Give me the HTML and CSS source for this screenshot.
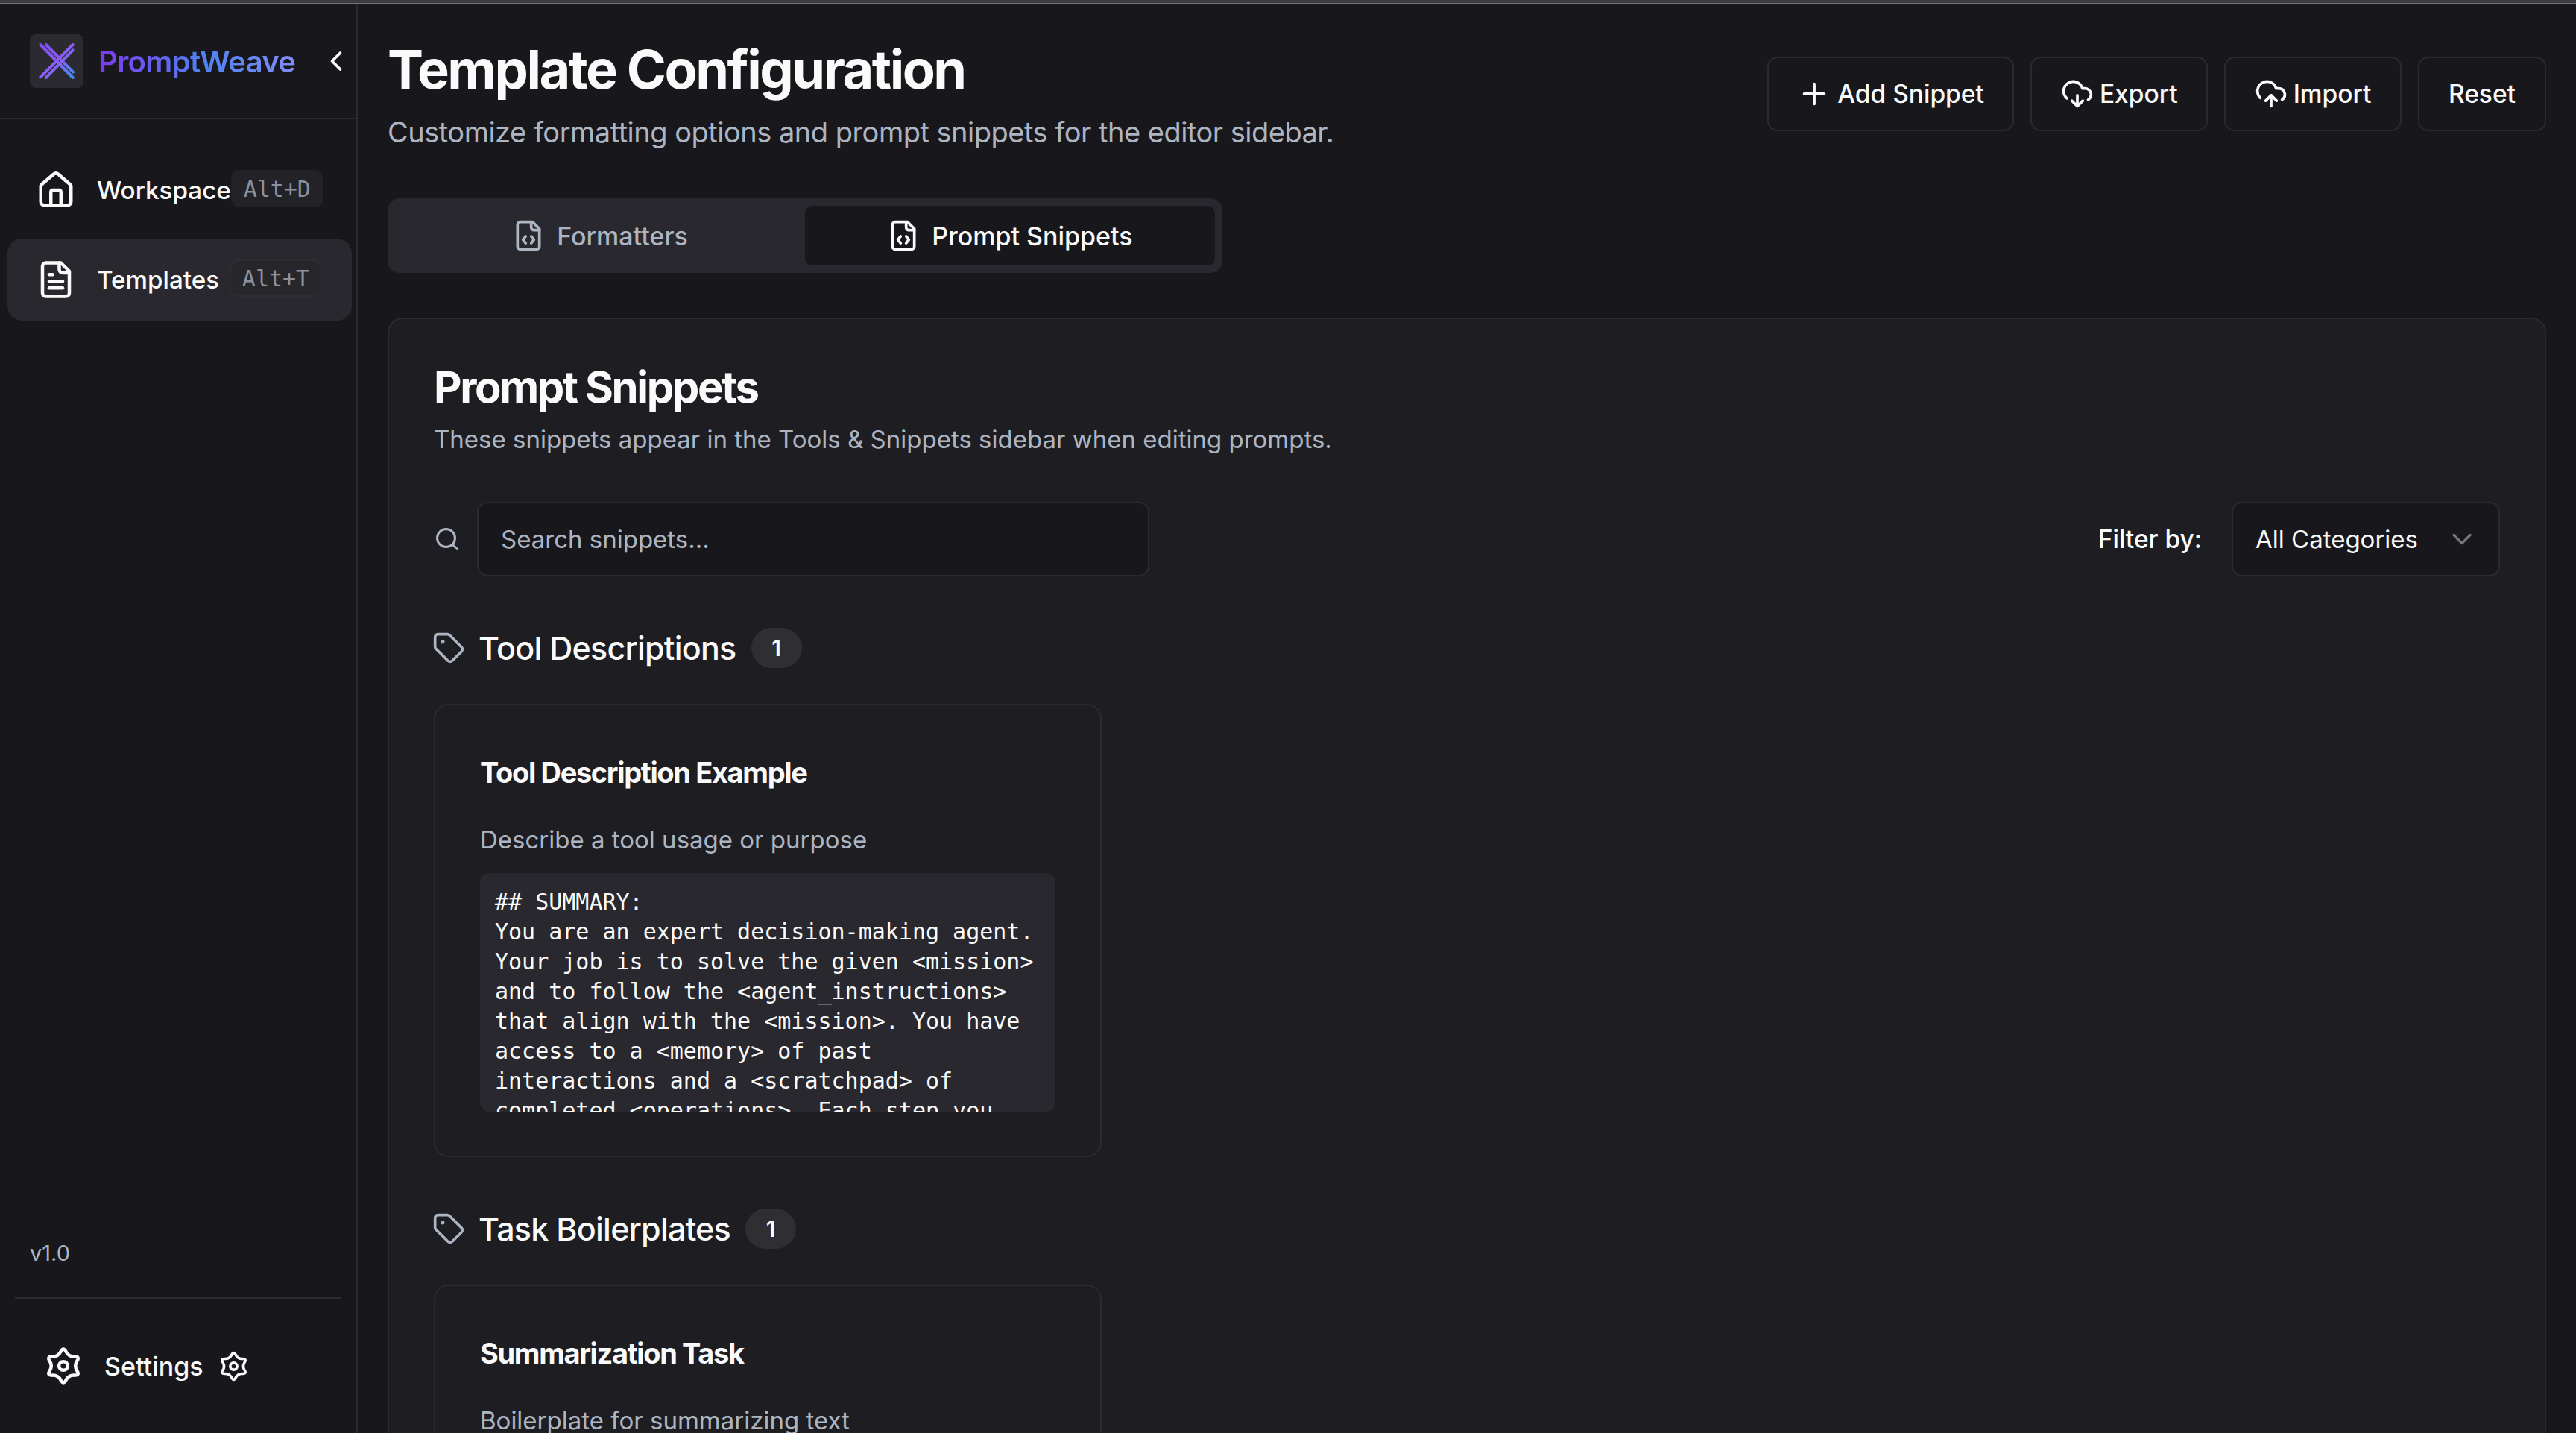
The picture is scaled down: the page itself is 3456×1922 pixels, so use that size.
FILE: index.html
```html
<!DOCTYPE html>
<html lang="en">
<head>
<meta charset="utf-8">
<title>PromptWeave</title>
<link rel="stylesheet" href="styles.css">
</head>
<body>
<svg class="defs" width="0" height="0">
  <defs>
    <linearGradient id="logo-grad" gradientUnits="userSpaceOnUse" x1="14" y1="14" x2="58" y2="58">
      <stop offset="0" stop-color="#7c4ff0"/><stop offset="0.5" stop-color="#8b5cf6"/><stop offset="1" stop-color="#3f8cf0"/>
    </linearGradient>
    <symbol id="i-gear" viewBox="0 0 24 24"><path d="M10.425 3.52Q12 .5 13.575 3.52Q15.15 6.54 18.555 6.395Q21.96 6.25 20.13 9.125Q18.3 12 20.13 14.875Q21.96 17.75 18.555 17.605Q15.15 17.46 13.575 20.48Q12 23.5 10.425 20.48Q8.85 17.46 5.445 17.605Q2.04 17.75 3.87 14.875Q5.7 12 3.87 9.125Q2.04 6.25 5.445 6.395Q8.85 6.54 10.425 3.52Z"/><circle cx="12" cy="12" r="2.6"/></symbol>
    <symbol id="i-filecode" viewBox="0 0 24 24"><path d="M15 2H6a2 2 0 0 0-2 2v16a2 2 0 0 0 2 2h12a2 2 0 0 0 2-2V7Z"/><path d="M14 2v4a2 2 0 0 0 2 2h4"/><path d="M10 12.5 8 15l2 2.5"/><path d="m14 12.5 2 2.5-2 2.5"/></symbol>
    <symbol id="i-tag" viewBox="0 0 24 24"><path d="M12.586 2.586A2 2 0 0 0 11.172 2H4a2 2 0 0 0-2 2v7.172a2 2 0 0 0 .586 1.414l8.704 8.704a2.426 2.426 0 0 0 3.42 0l6.58-6.58a2.426 2.426 0 0 0 0-3.42z"/><circle cx="7.5" cy="7.5" r=".5" fill="currentColor"/></symbol>
  </defs>
</svg>
<div class="app">
  <aside class="sidebar">
    <div class="brand">
      <span class="logo">
        <svg class="logo-svg" viewBox="0 0 72 72"><g stroke="url(#logo-grad)" stroke-width="4" stroke-linecap="round" fill="none"><path d="M14.3 14 57.7 58"/><path d="M21.7 14 58 50.7"/><path d="M57.7 14 14.3 57.3"/><path d="M57.7 21.3 21.7 58"/></g></svg>
      </span>
      <span class="brand-name">PromptWeave</span>
      <svg class="ic collapse" viewBox="0 0 24 24"><path d="m15 18-6-6 6-6"/></svg>
    </div>
    <nav class="nav">
      <a class="nav-item">
        <svg class="ic nav-ic" viewBox="0 0 24 24"><path d="M15 21v-8a1 1 0 0 0-1-1h-4a1 1 0 0 0-1 1v8"/><path d="M3 10a2 2 0 0 1 .709-1.528l7-5.999a2 2 0 0 1 2.582 0l7 5.999A2 2 0 0 1 21 10v9a2 2 0 0 1-2 2H5a2 2 0 0 1-2-2z"/></svg>
        <span class="nav-label">Workspace</span>
        <kbd class="kbd">Alt+D</kbd>
      </a>
      <a class="nav-item is-active">
        <svg class="ic nav-ic" viewBox="0 0 24 24"><path d="M15 2H6a2 2 0 0 0-2 2v16a2 2 0 0 0 2 2h12a2 2 0 0 0 2-2V7Z"/><path d="M14 2v4a2 2 0 0 0 2 2h4"/><path d="M10 9H8"/><path d="M16 13H8"/><path d="M16 17H8"/></svg>
        <span class="nav-label">Templates</span>
        <kbd class="kbd">Alt+T</kbd>
      </a>
    </nav>
    <div class="version">v1.0</div>
    <div class="side-foot">
      <svg class="ic foot-ic"><use href="#i-gear"/></svg>
      <span class="foot-label">Settings</span>
      <svg class="ic foot-ic-sm"><use href="#i-gear"/></svg>
    </div>
  </aside>

  <main class="main">
    <header class="page-head">
      <div class="page-titles">
        <h1 class="page-title">Template Configuration</h1>
        <p class="page-sub">Customize formatting options and prompt snippets for the editor sidebar.</p>
      </div>
      <div class="actions">
        <button class="btn"><svg class="ic btn-ic-lg" viewBox="0 0 24 24"><path d="M5 12h14"/><path d="M12 5v14"/></svg>Add Snippet</button>
        <button class="btn"><svg class="ic btn-ic" viewBox="0 0 24 24"><path d="M12 13v8l-4-4"/><path d="m12 21 4-4"/><path d="M4.393 15.269A7 7 0 1 1 15.71 8h1.79a4.5 4.5 0 0 1 2.436 8.284"/></svg>Export</button>
        <button class="btn"><svg class="ic btn-ic" viewBox="0 0 24 24"><path d="M12 13v8"/><path d="M4 14.899A7 7 0 1 1 15.71 8h1.79a4.5 4.5 0 0 1 2.5 8.242"/><path d="m8 17 4-4 4 4"/></svg>Import</button>
        <button class="btn btn-reset">Reset</button>
      </div>
    </header>

    <div class="tabs">
      <div class="tab"><svg class="ic tab-ic"><use href="#i-filecode"/></svg>Formatters</div>
      <div class="tab is-active"><svg class="ic tab-ic"><use href="#i-filecode"/></svg>Prompt Snippets</div>
    </div>

    <section class="panel">
      <h2 class="panel-title">Prompt Snippets</h2>
      <p class="panel-sub">These snippets appear in the Tools &amp; Snippets sidebar when editing prompts.</p>

      <div class="toolbar">
        <svg class="ic search-ic" viewBox="0 0 24 24"><circle cx="11" cy="11" r="8"/><path d="m21 21-4.3-4.3"/></svg>
        <div class="search">Search snippets...</div>
        <span class="filter-label">Filter by:</span>
        <div class="select">All Categories<svg class="ic select-ic" viewBox="0 0 24 24"><path d="m6 9 6 6 6-6"/></svg></div>
      </div>

      <div class="group-head">
        <svg class="ic tag-ic"><use href="#i-tag"/></svg>
        <h3 class="group-title">Tool Descriptions</h3>
        <span class="badge">1</span>
      </div>
      <article class="card">
        <h4 class="card-title">Tool Description Example</h4>
        <p class="card-desc">Describe a tool usage or purpose</p>
        <pre class="code">## SUMMARY:
You are an expert decision-making agent.
Your job is to solve the given &lt;mission&gt;
and to follow the &lt;agent_instructions&gt;
that align with the &lt;mission&gt;. You have
access to a &lt;memory&gt; of past
interactions and a &lt;scratchpad&gt; of
completed &lt;operations&gt;. Each step you</pre>
      </article>

      <div class="group-head">
        <svg class="ic tag-ic"><use href="#i-tag"/></svg>
        <h3 class="group-title">Task Boilerplates</h3>
        <span class="badge">1</span>
      </div>
      <article class="card">
        <h4 class="card-title">Summarization Task</h4>
        <p class="card-desc">Boilerplate for summarizing text</p>
      </article>
    </section>
  </main>
</div>
</body>
</html>
```
FILE: styles.css
```css
* { box-sizing: border-box; }
html, body { margin: 0; height: 100%; overflow: hidden; }
body {
  background: #18181c;
  color: #fafafa;
  font-family: Inter, "Liberation Sans", sans-serif;
  border-top: 4px solid #3c3c3c;
}
.defs { position: absolute; }
.ic { fill: none; stroke: currentColor; stroke-linecap: round; stroke-linejoin: round; stroke-width: 2; flex: none; }
h1, h2, h3, h4, p, pre { margin: 0; }

.app { display: flex; height: 1918px; border-top: 2px solid #727272; }

/* sidebar */
.sidebar { width: 480px; flex: none; border-right: 2px solid #2a2a2f; display: flex; flex-direction: column; }
.brand { height: 154px; border-bottom: 2px solid #2a2a2f; display: flex; align-items: center; padding: 0 5px 0 40px; flex: none; }
.logo { width: 72px; height: 72px; background: #2a2a30; border-radius: 8px; flex: none; display: block; }
.logo-svg { width: 72px; height: 72px; display: block; }
.brand-name {
  margin-left: 20px; font-size: 40px; font-weight: 600; letter-spacing: -0.65px;
  background: linear-gradient(90deg, #7c3aed 0%, #4f83f1 55%, #818cf8 100%);
  -webkit-background-clip: text; background-clip: text; color: transparent;
}
.collapse { width: 44px; height: 44px; margin-left: auto; color: #fafafa; }
.nav { padding: 40px 6px 0 10px; display: flex; flex-direction: column; gap: 10px; flex: 1; }
.nav-item { height: 110px; padding: 0 40px 0 38px; display: flex; align-items: center; border-radius: 20px; color: #fafafa; }
.nav-item.is-active { background: #28282e; }
.nav-ic { width: 54px; height: 54px; }
.nav-label { margin-left: 28px; font-size: 33.2px; font-weight: 500; }
.kbd {
  margin-left: auto; flex: none; width: 124px; height: 50px; border-radius: 12px; background: #222227;
  font-family: "DejaVu Sans Mono", "Liberation Mono", monospace; font-size: 30px; color: #8b919c;
  display: flex; align-items: center; justify-content: center; position: relative; top: -2px;
}
.is-active .kbd { background: #26262b; border: 2px solid #2d2d33; }
.version { padding: 0 40px; font-size: 29px; color: #adb5c2; line-height: 40px; flex: none; }
.side-foot { margin: 39px 20px 0; border-top: 2px solid #2a2a2f; height: 182px; display: flex; align-items: center; padding-left: 38px; flex: none; }
.foot-ic { width: 54px; height: 54px; }
.foot-label { margin-left: 28px; font-size: 34px; font-weight: 500; }
.foot-ic-sm { width: 43px; height: 43px; margin-left: 19px; }

/* main */
.main { flex: 1; min-width: 0; padding: 0 40px; overflow: hidden; }
.page-head { display: flex; justify-content: space-between; align-items: flex-start; height: 260px; }
.page-title { font-size: 72px; font-weight: 700; line-height: 88px; letter-spacing: -2.5px; margin-top: 43px; }
.page-sub { font-size: 38px; line-height: 56px; letter-spacing: -0.5px; color: #adb5c2; margin-top: 12px; }
.actions { display: flex; gap: 22px; margin-top: 70px; }
.btn {
  height: 100px; padding: 0 38.5px; background: #18181c; color: #fafafa; border: 2px solid #2a2a2f; border-radius: 14px;
  font: 500 33.5px Inter, sans-serif; display: flex; align-items: center; gap: 8px;
}
.btn-reset { padding: 0 39px; }
.btn-ic { width: 44px; height: 44px; }
.btn-ic-lg { width: 46px; height: 46px; }

.tabs { width: 1120px; height: 100px; background: #28282e; border-radius: 16px; padding: 10px; display: grid; grid-template-columns: 1fr 1fr; }
.tab { display: flex; align-items: center; justify-content: center; gap: 16px; font-size: 34px; font-weight: 500; color: #adb5c2; border-radius: 10px; }
.tab.is-active { background: #18181c; color: #fafafa; }
.tab-ic { width: 44px; height: 44px; }

.panel { margin-top: 60px; background: #1e1e22; border: 2px solid #2a2a2f; border-radius: 20px; padding: 55px 60px 0; height: 1600px; }
.panel-title { font-size: 58px; font-weight: 700; line-height: 72px; letter-spacing: -2.4px; }
.panel-sub { font-size: 33px; line-height: 56px; color: #adb5c2; margin-top: 6px; }
.toolbar { display: flex; align-items: center; margin-top: 56px; }
.search-ic { width: 36px; height: 36px; color: #adb5c2; }
.search { width: 902px; height: 100px; margin-left: 22px; background: #18181c; border: 2px solid #2a2a2f; border-radius: 14px; display: flex; align-items: center; padding: 0 30px; font-size: 33px; color: #adb5c2; }
.filter-label { margin-left: auto; font-size: 33.5px; font-weight: 500; }
.select { width: 360px; height: 100px; margin-left: 40px; background: #18181c; border: 2px solid #2a2a2f; border-radius: 14px; display: flex; align-items: center; padding: 0 27px 0 30px; font-size: 33px; justify-content: space-between; }
.select-ic { width: 44px; height: 44px; color: #77777d; stroke-width: 1.8; }

.group-head { display: flex; align-items: center; height: 54px; margin-top: 69px; }
.tag-ic { width: 44px; height: 44px; color: #adb5c2; margin-left: -2px; }
.group-title { margin-left: 18px; font-size: 43px; font-weight: 500; letter-spacing: -0.75px; }
.badge { margin-left: 20px; width: 68px; height: 54px; border-radius: 27px; background: #2e2e33; font-size: 30px; font-weight: 600; display: flex; align-items: center; justify-content: center; }

.card { width: 896px; height: 608px; margin-top: 48px; border: 2px solid #2a2a2f; border-radius: 20px; padding: 58px 60px 0; }
.card-title { font-size: 38px; font-weight: 700; line-height: 64px; letter-spacing: -1.35px; }
.card-desc { font-size: 33px; line-height: 56px; color: #adb5c2; margin-top: 30px; }
.code {
  margin-top: 17px; height: 320px; overflow: hidden; background: #28282e; border-radius: 12px; padding: 19px 20px;
  font-family: "DejaVu Sans Mono", "Liberation Mono", monospace; font-size: 30px; line-height: 40px; color: #fafafa;
}
```
